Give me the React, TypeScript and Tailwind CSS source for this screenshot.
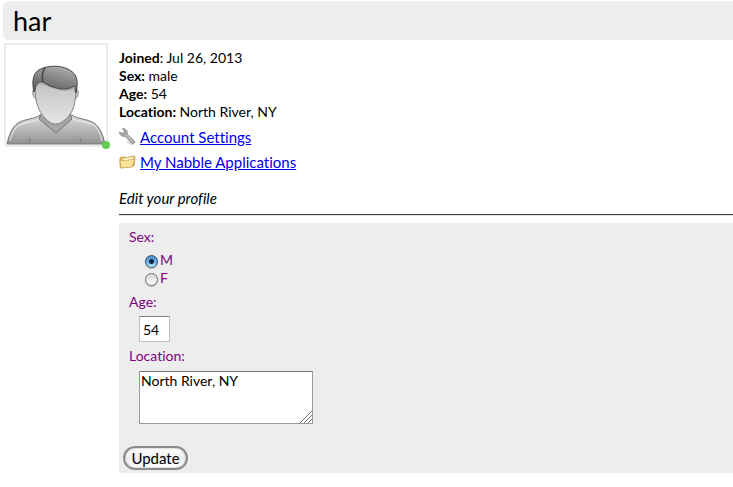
import { useState } from "react";

const Avatar = () => {
  return (
    <svg viewBox="0 0 100 100" className="block h-full w-full" role="img" aria-label="har">
      <defs>
        <linearGradient id="shirt" x1="0" y1="0" x2="0" y2="1">
          <stop offset="0" stopColor="#dcdcdc" />
          <stop offset="1" stopColor="#929292" />
        </linearGradient>
        <linearGradient id="face" x1="0" y1="0" x2="0" y2="1">
          <stop offset="0" stopColor="#b9b9b9" />
          <stop offset="0.4" stopColor="#cbcbcb" />
          <stop offset="1" stopColor="#e6e6e6" />
        </linearGradient>
        <linearGradient id="hair" x1="0.8" y1="0" x2="0.4" y2="1">
          <stop offset="0" stopColor="#b0b0b0" />
          <stop offset="1" stopColor="#5c5c5c" />
        </linearGradient>
      </defs>
      {/* shoulders */}
      <path
        d="M1 99C3 90 6 82 12 78C18 74 29 74 34 70L66 70C71 74 82 74 88 78C94 82 97 90 99 99Z"
        fill="url(#shirt)"
        stroke="#747474"
      />
      <path d="M4 96C6 88 9 82 14 80C22 76 30 77 35 73L50 87L66 73C71 77 79 76 87 80C92 83 94 88 96 96" fill="none" stroke="#f0f0f0" />
      <path d="M24 93L23 99M74 93L76 99" stroke="#858585" strokeWidth="1.5" />
      <path d="M35 69L33 74L50 88L66 74L64 69Z" fill="#a5a5a5" stroke="#747474" />
      {/* ears */}
      <path d="M29 44C25 44 27 55 31 54ZM70 44C74 44 72 55 68 54Z" fill="#d4d4d4" stroke="#858585" />
      {/* face */}
      <path
        d="M29 42C28 31 37 26 49 26C62 26 71 32 70 42C70 59 67 67 61 73C53 81 46 81 39 73C33 67 29 58 29 42Z"
        fill="url(#face)"
        stroke="#858585"
      />
      <path d="M31 38C35 33 38 38 47 41C55 44 65 44 69 39L68 44C60 48 52 45 45 43C38 40 34 38 31 42Z" fill="#b0b0b0" />
      {/* hair */}
      <path
        d="M28 47C25 35 28 26 35 24C42 20 58 20 65 26C72 30 72 38 70 48C68 45 70 41 68 41C62 46 52 44 44 41C38 38 35 35 32 38C29 40 30 44 28 47Z"
        fill="url(#hair)"
        stroke="#484848"
      />
      <path d="M39 23C35 28 36 33 37 37" fill="none" stroke="#444444" strokeWidth="1.5" />
    </svg>
  );
};

const WrenchIcon = () => {
  return (
    <svg viewBox="0 0 17 17" className="h-[17px] w-[17px] shrink-0" aria-hidden="true">
      <path d="M8 14L15 16.5" stroke="#d8d8d8" strokeWidth="2" />
      <path
        d="M3.5 0.5C7 0.5 9 3 8 6L15.5 13C16.5 15 14 16.5 12.8 15.2L6 8.2C3 9 0.5 7 0.5 4L3.5 5.5L5.5 3.5Z"
        fill="#a9a9a9"
        stroke="#858585"
        strokeWidth="0.8"
      />
      <path d="M7 6.5L14 13.5" stroke="#d0d0d0" />
    </svg>
  );
};

const FolderIcon = () => {
  return (
    <svg viewBox="0 0 17 17" className="h-[17px] w-[17px] shrink-0" aria-hidden="true">
      <path d="M1 5L2 4H6L7 5L14 3L16 4L15 13L2 15L1 14Z" fill="#e8c66a" stroke="#bd9440" strokeWidth="0.8" />
      <path d="M4 6L14 4V11H4Z" fill="#fff7d6" />
      <path d="M1 7L7 8L9 7L16 6L13 14L2 15Z" fill="#fae39b" stroke="#cba554" strokeWidth="0.8" />
    </svg>
  );
};

const radioClass =
  "mt-1 h-[13px] w-[13px] appearance-none rounded-full border border-[#707070] bg-linear-to-b from-[#d5d5d5] to-white shadow-[0_1px_1px_#bbbbbb] checked:border-[#314d79] checked:bg-[radial-gradient(circle,#12263c_0_2px,transparent_3px),linear-gradient(#4f8fce,#65acdf_50%,#c4f1ff)]";

export default function App() {
  const [sex, setSex] = useState("M");

  return (
    <div className="bg-white pt-px pb-3.5 font-['Lato',sans-serif] text-sm/[18px] text-black [font-variant-ligatures:none]">
      <header className="ml-[3px] rounded-l-md bg-[#ededed] px-2.5 py-1">
        <h1 className="text-[27px]/[31px]">har</h1>
      </header>

      <main className="flex items-start pl-1">
        <div className="relative mt-[3px] h-[104px] w-[104px] shrink-0 border-2 border-[#ededed]">
          <Avatar />
          <span className="absolute -right-1 -bottom-1 h-2 w-2 rounded-full bg-[#64cc50]" title="online" />
        </div>

        <div className="ml-[11px] min-w-0 flex-1 pt-[9px]">
          <p><b>Joined</b>: Jul 26, 2013</p>
          <p><b>Sex:</b> male</p>
          <p><b>Age:</b> 54</p>
          <p><b>Location:</b> North River, NY</p>

          <nav className="mt-[3px] text-[15px]/[18px]">
            <div className="flex h-[25px] items-center gap-1">
              <WrenchIcon />
              <a href="#settings" className="text-[#0000ee] underline">Account Settings</a>
            </div>
            <div className="flex h-[25px] items-center gap-1">
              <FolderIcon />
              <a href="#applications" className="text-[#0000ee] underline">My Nabble Applications</a>
            </div>
          </nav>

          <h2 className="mt-[15px] text-[15px]/[18px] italic">Edit your profile</h2>
          <hr className="mt-[7px] h-0.5 border-t border-b border-t-[#444444] border-b-[#dddddd]" />

          <form
            className="mt-[7px] bg-[#ededed] pt-[5px] pb-[3px] text-[#800080]"
            onSubmit={(e) => e.preventDefault()}
          >
            <fieldset className="px-2.5">
              <legend>Sex:</legend>
              <div className="mt-[5px] pl-4">
                <label className="flex items-start gap-0.5">
                  <input type="radio" name="sex" className={radioClass} checked={sex === "M"} onChange={() => setSex("M")} />
                  M
                </label>
                <label className="flex items-start gap-0.5">
                  <input type="radio" name="sex" className={radioClass} checked={sex === "F"} onChange={() => setSex("F")} />
                  F
                </label>
              </div>
            </fieldset>

            <div className="mt-1.5 px-2.5">
              <label htmlFor="age">Age:</label>
              <input
                id="age"
                type="text"
                defaultValue="54"
                className="mt-[5px] ml-2.5 block h-[26px] w-[31px] border border-[#c0c0c0] border-t-[#808080] bg-white px-[3px] text-black"
              />
            </div>

            <div className="mt-[5px] px-2.5">
              <label htmlFor="location">Location:</label>
              <div className="relative mt-1.5 ml-2.5 w-[174px]">
                <textarea
                  id="location"
                  defaultValue="North River, NY"
                  className="block h-[53px] w-full resize-none border border-[#999999] border-t-[#777777] bg-white px-px text-black"
                />
                <svg viewBox="0 0 12 12" className="absolute right-px bottom-px h-3 w-3" aria-hidden="true">
                  <path d="M0 12L12 0M4 12L12 4M8 12L12 8" stroke="#777777" />
                </svg>
              </div>
            </div>

            <button
              type="submit"
              className="mt-[22px] ml-1 block h-6 w-[65px] rounded-full border-2 border-[#8b8b8b] bg-linear-to-b from-white via-[#eeeeee] to-white text-[15px]/[20px] text-black shadow-[inset_0_0_2px_#999999]"
            >
              Update
            </button>
          </form>
        </div>
      </main>
    </div>
  );
}
